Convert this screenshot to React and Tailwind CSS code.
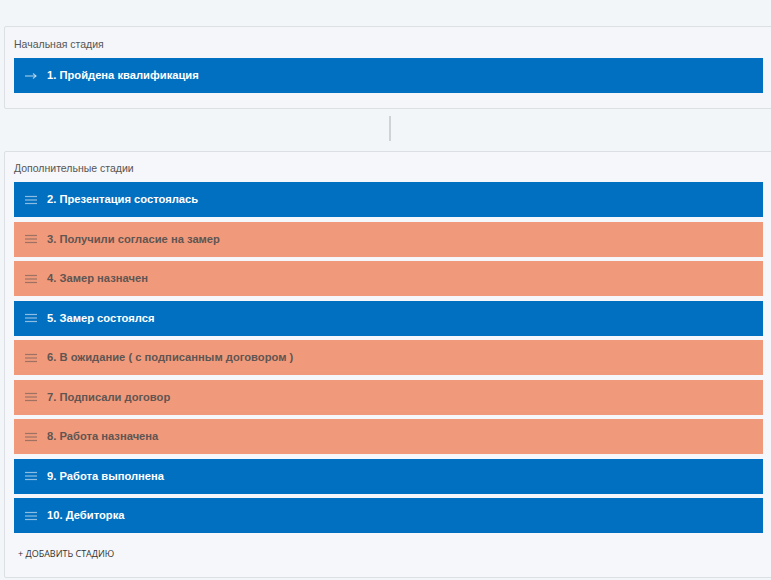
import React from "react";

const stages = [
  { n: "2. Презентация состоялась", c: "blue" },
  { n: "3. Получили согласие на замер", c: "salmon" },
  { n: "4. Замер назначен", c: "salmon" },
  { n: "5. Замер состоялся", c: "blue" },
  { n: "6. В ожидание ( с подписанным договором )", c: "salmon" },
  { n: "7. Подписали договор", c: "salmon" },
  { n: "8. Работа назначена", c: "salmon" },
  { n: "9. Работа выполнена", c: "blue" },
  { n: "10. Дебиторка", c: "blue" },
];

function Burger({ blue }) {
  return (
    <svg width="12" height="10" viewBox="0 0 12 10" className="shrink-0">
      <g stroke={blue ? "rgba(255,255,255,0.55)" : "rgba(90,80,78,0.55)"} strokeWidth="1.2">
        <line x1="0" y1="1.5" x2="12" y2="1.5" />
        <line x1="0" y1="5" x2="12" y2="5" />
        <line x1="0" y1="8.5" x2="12" y2="8.5" />
      </g>
    </svg>
  );
}

function Row({ children, color, icon }) {
  const blue = color === "blue";
  return (
    <div
      className={`h-[35px] flex items-center pl-[11px] gap-[10px] text-[11.2px] font-bold ${
        blue ? "bg-[#0270c0] text-white" : "bg-[#f19a7b] text-[#5f5552]"
      }`}
    >
      {icon}
      <span>{children}</span>
    </div>
  );
}

export default function App() {
  return (
    <div
      className="w-[771px] h-[580px] overflow-hidden bg-[#f3f6f9] pt-[26px]"
      style={{ fontFamily: '"Liberation Sans", Arial, sans-serif' }}
    >
      <div className="ml-[4px] w-[769px] border border-[#dcdfe3] rounded-[2px] bg-[#f4f6f9] px-[9px] pt-[11px] pb-[15px]">
        <div className="text-[10.5px] text-[#555] leading-[13px] mb-[7px]">Начальная стадия</div>
        <Row
          color="blue"
          icon={
            <svg width="12" height="8" viewBox="0 0 12 8" className="shrink-0">
              <g stroke="rgba(255,255,255,0.6)" strokeWidth="1.2" fill="none">
                <line x1="0" y1="4" x2="11" y2="4" />
                <polyline points="8,1.5 11,4 8,6.5" />
              </g>
            </svg>
          }
        >
          1. Пройдена квалификация
        </Row>
      </div>

      <div className="flex justify-center h-[42px] pt-[7px]">
        <div className="w-[2px] h-[25px] bg-[#cfd3d8] ml-[9px]" />
      </div>

      <div className="ml-[4px] w-[769px] border border-[#dcdfe3] rounded-[2px] bg-[#f5f7fa] px-[9px] pt-[10px] pb-[17px]">
        <div className="text-[10.5px] text-[#555] leading-[13px] mb-[7px]">Дополнительные стадии</div>
        <div className="flex flex-col gap-[4.5px]">
          {stages.map((s) => (
            <Row key={s.n} color={s.c} icon={<Burger blue={s.c === "blue"} />}>
              {s.n}
            </Row>
          ))}
        </div>
        <div
          className="mt-[15px] pl-[4px] text-[9px] text-[#333] leading-[12px]"
          style={{ fontFamily: '"Open Sans", "Noto Sans", sans-serif' }}
        >
          + ДОБАВИТЬ СТАДИЮ
        </div>
      </div>
    </div>
  );
}
